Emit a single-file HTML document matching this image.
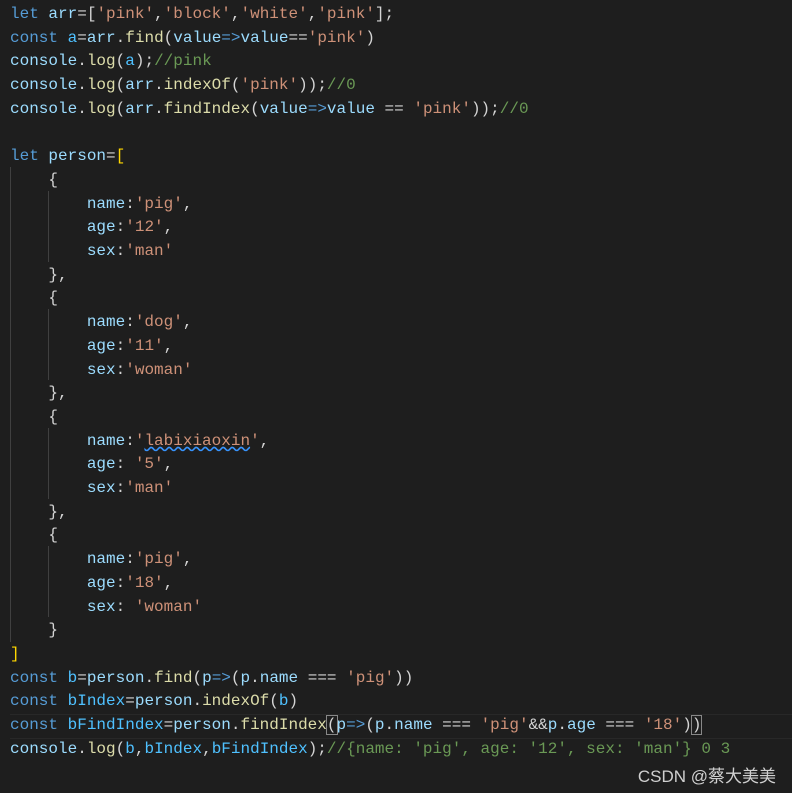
<!DOCTYPE html><html><head><style>
body{margin:0;background:#1e1e1e;width:792px;height:793px;overflow:hidden;position:relative}
pre{margin:0;position:absolute;left:10px;top:3px;font-family:"Liberation Mono",monospace;font-size:16px;line-height:23.7px;color:#d4d4d4}
.k{color:#569cd6}.v{color:#9cdcfe}.c{color:#4fc1ff}.f{color:#dcdcaa}.s{color:#ce9178}.m{color:#6a9955}.y{color:#ffd700}
.g{position:absolute;width:1px;background:#404040}
.sq{text-decoration:underline wavy #3794ff}
.hl{position:absolute;left:10px;right:0;top:714px;height:23px;border-top:1px solid #282828;border-bottom:1px solid #282828}
.wm{position:absolute;right:16px;top:762px;color:#d0d0d0;font:17px "Liberation Sans","Noto Sans CJK SC",sans-serif}
</style></head><body>
<div class="hl"></div>
<div class="g" style="left:10px;top:167px;height:475px"></div>
<div class="g" style="left:48px;top:191px;height:71px"></div>
<div class="g" style="left:48px;top:309px;height:71px"></div>
<div class="g" style="left:48px;top:428px;height:71px"></div>
<div class="g" style="left:48px;top:546px;height:71px"></div>
<pre><span class="k">let</span> <span class="v">arr</span>=[<span class="s">'pink'</span>,<span class="s">'block'</span>,<span class="s">'white'</span>,<span class="s">'pink'</span>];
<span class="k">const</span> <span class="c">a</span>=<span class="v">arr</span>.<span class="f">find</span>(<span class="v">value</span><span class="k">=&gt;</span><span class="v">value</span>==<span class="s">'pink'</span>)
<span class="v">console</span>.<span class="f">log</span>(<span class="c">a</span>);<span class="m">//pink</span>
<span class="v">console</span>.<span class="f">log</span>(<span class="v">arr</span>.<span class="f">indexOf</span>(<span class="s">'pink'</span>));<span class="m">//0</span>
<span class="v">console</span>.<span class="f">log</span>(<span class="v">arr</span>.<span class="f">findIndex</span>(<span class="v">value</span><span class="k">=&gt;</span><span class="v">value</span> == <span class="s">'pink'</span>));<span class="m">//0</span>

<span class="k">let</span> <span class="v">person</span>=<span class="y">[</span>
    {
        <span class="v">name</span>:<span class="s">'pig'</span>,
        <span class="v">age</span>:<span class="s">'12'</span>,
        <span class="v">sex</span>:<span class="s">'man'</span>
    },
    {
        <span class="v">name</span>:<span class="s">'dog'</span>,
        <span class="v">age</span>:<span class="s">'11'</span>,
        <span class="v">sex</span>:<span class="s">'woman'</span>
    },
    {
        <span class="v">name</span>:<span class="s">'<span class="sq">labixiaoxin</span>'</span>,
        <span class="v">age</span>: <span class="s">'5'</span>,
        <span class="v">sex</span>:<span class="s">'man'</span>
    },
    {
        <span class="v">name</span>:<span class="s">'pig'</span>,
        <span class="v">age</span>:<span class="s">'18'</span>,
        <span class="v">sex</span>: <span class="s">'woman'</span>
    }
<span class="y">]</span>
<span class="k">const</span> <span class="c">b</span>=<span class="v">person</span>.<span class="f">find</span>(<span class="v">p</span><span class="k">=&gt;</span>(<span class="v">p</span>.<span class="v">name</span> === <span class="s">'pig'</span>))
<span class="k">const</span> <span class="c">bIndex</span>=<span class="v">person</span>.<span class="f">indexOf</span>(<span class="c">b</span>)
<span class="k">const</span> <span class="c">bFindIndex</span>=<span class="v">person</span>.<span class="f">findIndex</span><span style="outline:1px solid #888">(</span><span class="v">p</span><span class="k">=&gt;</span>(<span class="v">p</span>.<span class="v">name</span> === <span class="s">'pig'</span>&amp;&amp;<span class="v">p</span>.<span class="v">age</span> === <span class="s">'18'</span>)<span style="outline:1px solid #888">)</span>
<span class="v">console</span>.<span class="f">log</span>(<span class="c">b</span>,<span class="c">bIndex</span>,<span class="c">bFindIndex</span>);<span class="m">//{name: 'pig', age: '12', sex: 'man'} 0 3</span></pre>
<div class="wm">CSDN @蔡大美美</div>
</body></html>
